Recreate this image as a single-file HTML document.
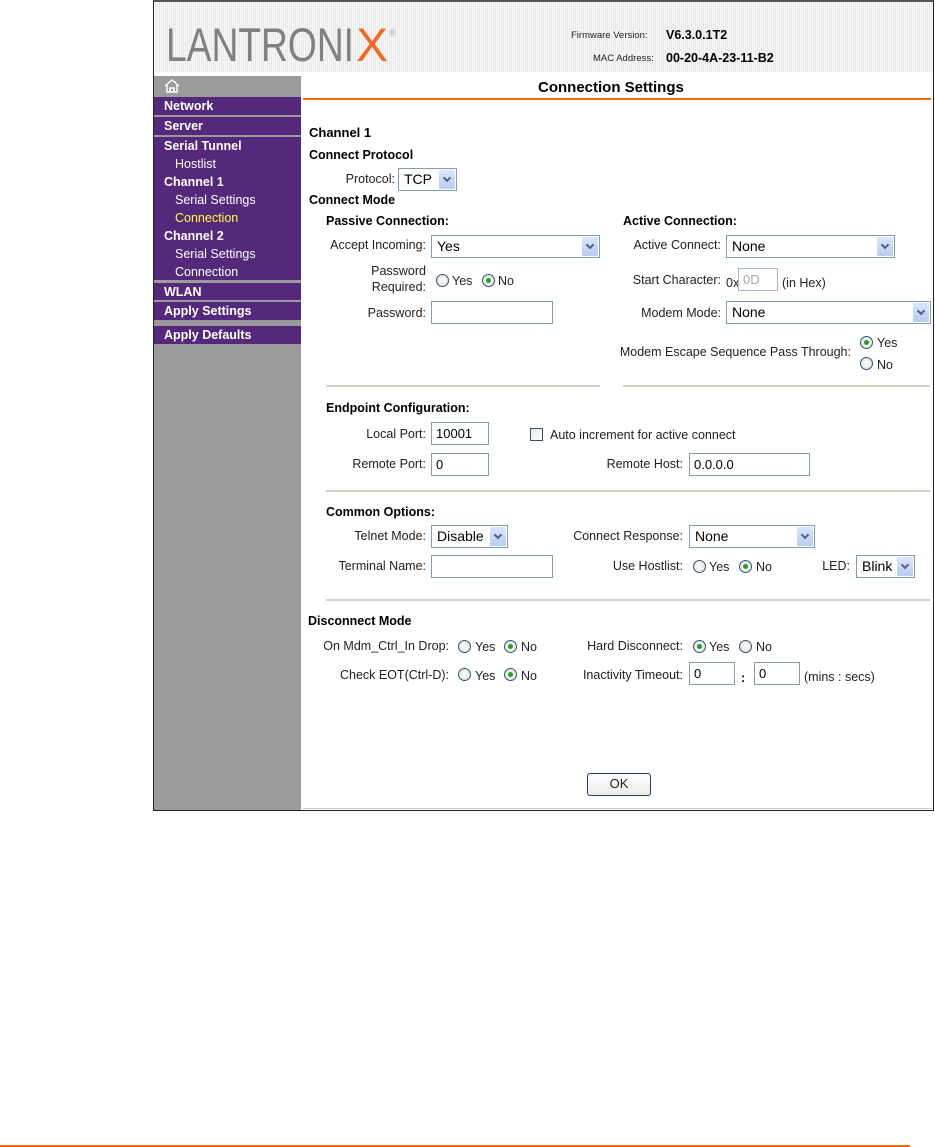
<!DOCTYPE html>
<html><head><meta charset="utf-8">
<style>
*{margin:0;padding:0;box-sizing:border-box}
body{width:935px;height:1147px;background:#fff;position:relative;overflow:hidden;font-family:"Liberation Sans",Arial,sans-serif;font-size:12px;color:#000}
.a{position:absolute;white-space:nowrap}
.t{position:absolute;white-space:nowrap;line-height:14px;color:#222;font-size:12.5px}
.r{text-align:right}
.b{font-weight:bold;color:#000}
.frame{position:absolute;left:153px;top:0;width:781px;height:811px;border:1.5px solid #222;border-top:2px solid #555}
.hdr{position:absolute;left:155px;top:2px;width:778px;height:70px;background:repeating-linear-gradient(90deg,#e9e9e9 0,#e9e9e9 1px,#f7f7f7 1px,#f7f7f7 2px)}
.side{position:absolute;left:154px;top:76px;width:147px;height:734px;background:#9a9a9a}
.p{position:absolute;left:0;width:147px;background:#54297c}
.m{position:absolute;left:10px;color:#fff;font-weight:bold;font-size:12.5px;line-height:14px}
.s{position:absolute;left:21px;color:#fff;font-size:12.5px;line-height:14px}
.in{position:absolute;border:1px solid #7f9db9;background:#fff;font-size:13px;padding:2px 0 0 4px;height:23px;color:#000;line-height:17px}
.sel{position:absolute;border:1px solid #7f9db9;background:#fff;font-size:14px;padding:2px 0 0 5px;height:23px;line-height:17px;color:#000}
.sel:after{content:"";position:absolute;right:1px;top:1px;width:16px;height:19px;background:linear-gradient(#dbe6fb,#b7cbf1);border-radius:1px}
.sel i{position:absolute;right:6px;top:6px;width:6px;height:6px;border-right:2px solid #4d6185;border-bottom:2px solid #4d6185;transform:rotate(45deg);z-index:2}
.rd{position:absolute;width:13px;height:13px;border:1px solid #2f5479;border-radius:50%;background:radial-gradient(#fff,#dcdcd4)}
.rd.on:after{content:"";position:absolute;left:3px;top:3px;width:5px;height:5px;border-radius:50%;background:#21a121}
.hr{position:absolute;height:2px;background:#d4d0c8}
</style></head><body>
<div class="frame"></div>
<div class="hdr"></div>
<svg class="a" style="left:160px;top:20px" width="240" height="50" viewBox="0 0 240 50">
<text x="6" y="41" font-family="Liberation Sans, sans-serif" font-size="47" fill="#7d8180" textLength="188" lengthAdjust="spacingAndGlyphs">LANTRONI</text>
<text x="196" y="41" font-family="Liberation Sans, sans-serif" font-size="47" fill="#f26722" textLength="32" lengthAdjust="spacingAndGlyphs">X</text>
<text x="229" y="16" font-family="Liberation Sans, sans-serif" font-size="9" fill="#aaa">®</text>
</svg>
<div class="t" style="left:571px;top:29px;font-size:9.5px">Firmware Version:</div>
<div class="t b" style="left:666px;top:28px;font-size:12.5px">V6.3.0.1T2</div>
<div class="t" style="left:593px;top:52px;font-size:9.5px">MAC Address:</div>
<div class="t b" style="left:666px;top:51px;font-size:12.5px">00-20-4A-23-11-B2</div>

<div class="side">
 <svg style="position:absolute;left:10px;top:3px" width="16" height="14" viewBox="0 0 16 14"><path d="M1 7 L8 1 L15 7 M3 6 V13 H13 V6 M6 13 V9 H10 V13 M11 2 V4" fill="none" stroke="#fff" stroke-width="1.4"/></svg>
 <div class="p" style="top:21px;height:18px"><span class="m" style="top:2px">Network</span></div>
 <div class="p" style="top:41px;height:18px"><span class="m" style="top:2px">Server</span></div>
 <div class="p" style="top:61px;height:143px">
  <span class="m" style="top:2px">Serial Tunnel</span>
  <span class="s" style="top:20px">Hostlist</span>
  <span class="m" style="top:38px">Channel 1</span>
  <span class="s" style="top:56px">Serial Settings</span>
  <span class="s" style="top:74px;color:#ffff33">Connection</span>
  <span class="m" style="top:92px">Channel 2</span>
  <span class="s" style="top:110px">Serial Settings</span>
  <span class="s" style="top:128px">Connection</span>
 </div>
 <div class="p" style="top:207px;height:17px"><span class="m" style="top:2px">WLAN</span></div>
 <div class="p" style="top:226px;height:18px"><span class="m" style="top:2px">Apply Settings</span></div>
 <div class="p" style="top:250px;height:18px"><span class="m" style="top:2px">Apply Defaults</span></div>
</div>

<div class="t b" style="left:538px;top:79px;font-size:15px;line-height:18px">Connection Settings</div>
<div class="a" style="left:303px;top:98px;width:628px;height:2px;background:#f26a10"></div>

<div class="t b" style="left:309px;top:126px;font-size:13px">Channel 1</div>
<div class="t b" style="left:309px;top:148px">Connect Protocol</div>
<div class="t r" style="right:540px;top:172px">Protocol:</div>
<div class="sel" style="left:398px;top:168px;width:59px">TCP<i></i></div>
<div class="t b" style="left:309px;top:193px">Connect Mode</div>
<div class="t b" style="left:326px;top:214px">Passive Connection:</div>
<div class="t r" style="right:509px;top:238px">Accept Incoming:</div>
<div class="sel" style="left:431px;top:235px;width:169px">Yes<i></i></div>
<div class="t r" style="right:509px;top:264px">Password</div>
<div class="t r" style="right:509px;top:280px">Required:</div>
<div class="rd" style="left:436px;top:274px"></div><div class="t" style="left:452px;top:274px">Yes</div>
<div class="rd on" style="left:482px;top:274px"></div><div class="t" style="left:498px;top:274px">No</div>
<div class="t r" style="right:509px;top:306px">Password:</div>
<div class="in" style="left:431px;top:301px;width:122px"></div>

<div class="t b" style="left:623px;top:214px">Active Connection:</div>
<div class="t r" style="right:214px;top:238px">Active Connect:</div>
<div class="sel" style="left:726px;top:235px;width:169px">None<i></i></div>
<div class="t r" style="right:214px;top:273px">Start Character:</div>
<div class="t" style="left:726px;top:276px">0x</div>
<div class="in" style="left:738px;top:268px;width:40px;color:#aaa;border-color:#a8b8cc">0D</div>
<div class="t" style="left:782px;top:276px">(in Hex)</div>
<div class="t r" style="right:214px;top:306px">Modem Mode:</div>
<div class="sel" style="left:726px;top:301px;width:205px">None<i></i></div>
<div class="t r" style="right:84px;top:345px">Modem Escape Sequence Pass Through:</div>
<div class="rd on" style="left:860px;top:336px"></div><div class="t" style="left:877px;top:336px">Yes</div>
<div class="rd" style="left:860px;top:357px"></div><div class="t" style="left:877px;top:358px">No</div>
<div class="hr" style="left:326px;top:385px;width:274px"></div>
<div class="hr" style="left:623px;top:385px;width:307px"></div>

<div class="t b" style="left:326px;top:401px">Endpoint Configuration:</div>
<div class="t r" style="right:509px;top:427px">Local Port:</div>
<div class="in" style="left:431px;top:422px;width:58px">10001</div>
<div class="a" style="left:530px;top:428px;width:13px;height:13px;border:1px solid #2f5479;background:linear-gradient(135deg,#e6e6e0,#fff)"></div>
<div class="t" style="left:550px;top:428px">Auto increment for active connect</div>
<div class="t r" style="right:509px;top:457px">Remote Port:</div>
<div class="in" style="left:431px;top:453px;width:58px">0</div>
<div class="t r" style="right:252px;top:457px">Remote Host:</div>
<div class="in" style="left:689px;top:453px;width:121px">0.0.0.0</div>
<div class="hr" style="left:326px;top:490px;width:604px"></div>

<div class="t b" style="left:326px;top:505px">Common Options:</div>
<div class="t r" style="right:509px;top:529px">Telnet Mode:</div>
<div class="sel" style="left:431px;top:525px;width:77px">Disable<i></i></div>
<div class="t r" style="right:252px;top:529px">Connect Response:</div>
<div class="sel" style="left:689px;top:525px;width:126px">None<i></i></div>
<div class="t r" style="right:509px;top:559px">Terminal Name:</div>
<div class="in" style="left:431px;top:555px;width:122px"></div>
<div class="t r" style="right:252px;top:559px">Use Hostlist:</div>
<div class="rd" style="left:693px;top:560px"></div><div class="t" style="left:709px;top:560px">Yes</div>
<div class="rd on" style="left:739px;top:560px"></div><div class="t" style="left:756px;top:560px">No</div>
<div class="t r" style="right:85px;top:559px">LED:</div>
<div class="sel" style="left:856px;top:555px;width:59px">Blink<i></i></div>
<div class="hr" style="left:326px;top:599px;width:604px"></div>

<div class="t b" style="left:308px;top:614px">Disconnect Mode</div>
<div class="t r" style="right:486px;top:639px">On Mdm_Ctrl_In Drop:</div>
<div class="rd" style="left:458px;top:640px"></div><div class="t" style="left:475px;top:640px">Yes</div>
<div class="rd on" style="left:504px;top:640px"></div><div class="t" style="left:521px;top:640px">No</div>
<div class="t r" style="right:486px;top:668px">Check EOT(Ctrl-D):</div>
<div class="rd" style="left:458px;top:668px"></div><div class="t" style="left:475px;top:669px">Yes</div>
<div class="rd on" style="left:504px;top:668px"></div><div class="t" style="left:521px;top:669px">No</div>
<div class="t r" style="right:252px;top:639px">Hard Disconnect:</div>
<div class="rd on" style="left:693px;top:640px"></div><div class="t" style="left:709px;top:640px">Yes</div>
<div class="rd" style="left:739px;top:640px"></div><div class="t" style="left:756px;top:640px">No</div>
<div class="t r" style="right:252px;top:668px">Inactivity Timeout:</div>
<div class="in" style="left:689px;top:662px;width:46px">0</div>
<div class="t b" style="left:741px;top:671px">:</div>
<div class="in" style="left:754px;top:662px;width:46px">0</div>
<div class="t" style="left:804px;top:670px">(mins : secs)</div>

<div class="a" style="left:587px;top:773px;width:64px;height:23px;border:1px solid #1c3f6e;border-radius:3px;background:linear-gradient(#fff,#ecebe6);text-align:center;line-height:20px;font-size:13px;color:#222">OK</div>
<div class="a" style="left:303px;top:808px;width:629px;height:1px;background:#ccc"></div>

<div class="a" style="left:0;top:1145px;width:910px;height:2px;background:#f26a10"></div>
</body></html>
